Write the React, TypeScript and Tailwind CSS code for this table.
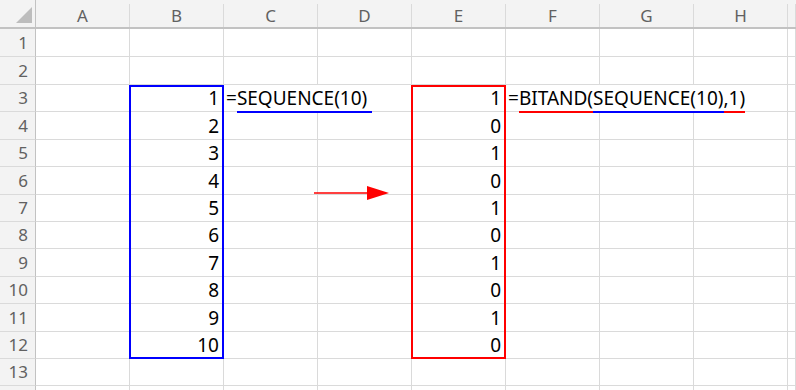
import React from 'react';

const COLS = ['A', 'B', 'C', 'D', 'E', 'F', 'G', 'H'];
const ROW_COUNT = 14;
const SEQ = Array.from({ length: 10 }, (_, i) => i + 1);

// cells whose text spills into the next cell lose their right gridline
const SPILL = new Set(['C3', 'F3', 'G3']);

function Formula1() {
  return (
    <span>
      =<span className="border-b-2 border-[#0000ff] pr-[5px]">SEQUENCE(10)</span>
    </span>
  );
}

function Formula2() {
  return (
    <span>
      =<span className="border-b-2 border-[#ff0000]">BITAND(</span>
      <span className="border-b-2 border-[#0000ff]">SEQUENCE(10)</span>
      <span className="border-b-2 border-[#ff0000]">,1)</span>
    </span>
  );
}

function cellValue(col: string, row: number): { node: React.ReactNode; right: boolean } | null {
  const idx = row - 3;
  if (col === 'B' && idx >= 0 && idx < 10) return { node: SEQ[idx], right: true };
  if (col === 'E' && idx >= 0 && idx < 10) return { node: SEQ[idx] & 1, right: true };
  if (col === 'C' && row === 3) return { node: <Formula1 />, right: false };
  if (col === 'F' && row === 3) return { node: <Formula2 />, right: false };
  return null;
}

export default function App() {
  const rows = Array.from({ length: ROW_COUNT }, (_, i) => i + 1);

  return (
    <div className="h-[390px] w-[796px] overflow-hidden bg-white font-['Noto_Sans',sans-serif]">
      <div className="relative grid grid-cols-[36px_repeat(8,94px)_1fr] grid-rows-[29px_28px_28px_repeat(12,27.4px)]">
        {/* corner with select-all triangle */}
        <div className="flex items-end justify-end border-b-2 border-r border-[#c2c2c2] bg-[#f3f3f3] pb-[4px] pr-[3px]">
          <svg width="16" height="16" viewBox="0 0 16 16">
            <polygon points="16,0 16,16 0,16" fill="#bdbdbd" />
          </svg>
        </div>

        {/* column headers */}
        {[...COLS, ''].map((c, i) => (
          <div key={'h' + i} className="flex border-b-2 border-[#c2c2c2] bg-[#f3f3f3]">
            <div className="mt-1 flex flex-1 items-center justify-center border-r border-[#dadada] text-[17px] text-[#616161]">
              {c}
            </div>
          </div>
        ))}

        {rows.map((r) => (
          <React.Fragment key={r}>
            <div className="flex items-center justify-end border-b border-r border-b-[#dadada] border-r-[#c2c2c2] bg-[#f3f3f3] pr-[7px] text-[17px] text-[#616161]">
              {r < ROW_COUNT ? r : null}
            </div>
            {[...COLS, ''].map((c, i) => {
              const v = c ? cellValue(c, r) : null;
              const spill = SPILL.has(c + r);
              return (
                <div
                  key={c + r + i}
                  className={
                    'flex items-end whitespace-nowrap border-b border-[#dadada] text-[19px] leading-[24px] text-black ' +
                    (spill ? 'overflow-visible ' : 'border-r ') +
                    (v?.right ? 'justify-end pr-[4px]' : 'pl-[2px]')
                  }
                >
                  {v ? <span className="relative z-10 pb-[1px]">{v.node}</span> : null}
                </div>
              );
            })}
          </React.Fragment>
        ))}

        {/* shape outlines drawn over the two ranges */}
        <div className="pointer-events-none absolute -left-px inset-y-0 right-0 col-start-3 col-end-4 row-start-4 row-end-14 border-2 border-[#0000ff]" />
        <div className="pointer-events-none absolute -left-px inset-y-0 right-0 col-start-6 col-end-7 row-start-4 row-end-14 border-2 border-[#ff0000]" />

        {/* arrow shape */}
        <svg className="absolute left-[314px] top-[186px]" width="75" height="14" viewBox="0 0 75 14">
          <line x1="0" y1="7" x2="55" y2="7" stroke="#ff0000" strokeWidth="1.5" />
          <polygon points="53,0 75,7 53,14" fill="#ff0000" />
        </svg>
      </div>
    </div>
  );
}
